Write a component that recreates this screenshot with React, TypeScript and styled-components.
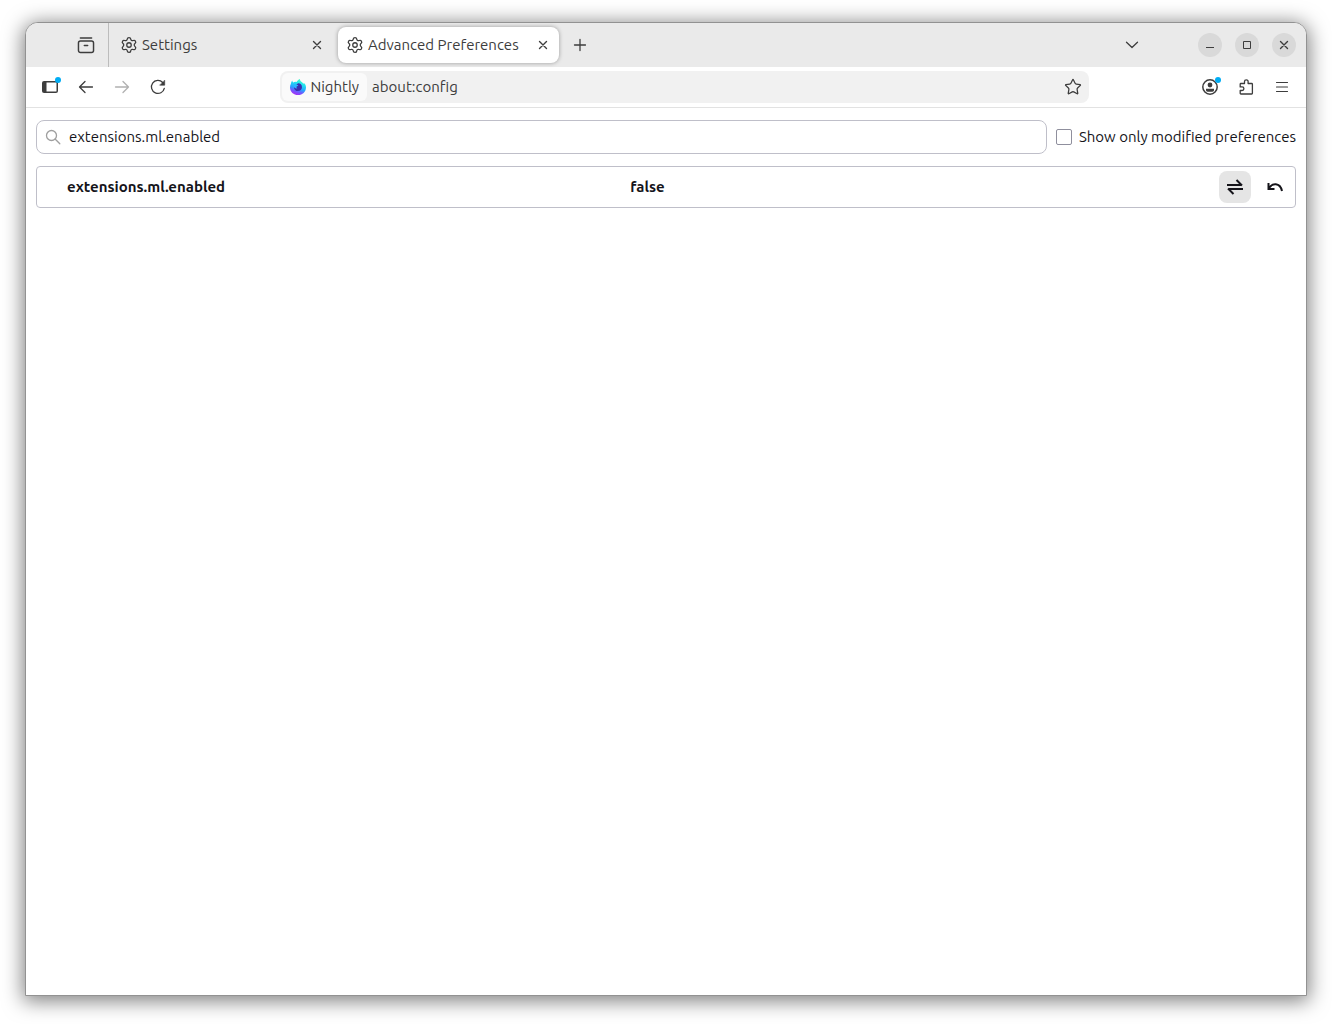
import React from "react";
import styled, { createGlobalStyle, css } from "styled-components";
import { Settings, Star } from "lucide-react";

const GlobalStyle = createGlobalStyle`
  *, *::before, *::after { box-sizing: border-box; }
  body {
    margin: 0;
    background: #fff;
    color: #15141a;
    font-family: Ubuntu, "Noto Sans", "Open Sans", sans-serif;
    font-size: 15px;
    line-height: 20px;
  }
  button, input { font: inherit; color: inherit; }
  button { margin: 0; padding: 0; border: 0; background: none; }
  svg { display: block; flex: none; }
`;

const Desktop = styled.div`
  display: flex;
  min-height: 100vh;
  padding: 22px 25px 28px;
`;

const BrowserWindow = styled.div`
  flex: 1;
  min-width: 0;
  display: flex;
  flex-direction: column;
  overflow: hidden;
  background: #fff;
  border: 1px solid #929292;
  border-radius: 13px 13px 0 0;
  box-shadow: 0 3px 20px 2px rgba(0, 0, 0, 0.5);
`;

const TabBar = styled.header`
  display: flex;
  align-items: center;
  height: 44px;
  padding: 0 10px 0 44px;
  background: #eaeaea;
  color: #3d3d3d;
`;

const iconButton = css`
  display: flex;
  align-items: center;
  justify-content: center;
  flex: none;
`;

const ToolButton = styled.button<{ $faded?: boolean }>`
  ${iconButton}
  position: relative;
  width: 32px;
  height: 32px;
  opacity: ${(p) => (p.$faded ? 0.4 : 1)};
`;

const TabStrip = styled.nav`
  display: flex;
  align-items: center;
  align-self: stretch;
  gap: 5px;
  margin-left: 6px;
  padding: 0 5px 0 3px;
  border-left: 1px solid #bcbcbc;
`;

const Tab = styled.div<{ $selected?: boolean }>`
  display: flex;
  align-items: center;
  width: 221px;
  height: 36px;
  padding: 0 4px 0 8px;
  border-radius: 8px;
  ${(p) =>
    p.$selected &&
    css`
      background: #fff;
      box-shadow: 0 0 4px rgba(0, 0, 0, 0.35);
    `}
`;

const TabTitle = styled.span`
  flex: 1;
  margin-left: 4px;
  white-space: nowrap;
`;

const TabClose = styled.button`
  ${iconButton}
  width: 24px;
  height: 24px;
`;

const WindowControls = styled.div`
  display: flex;
  gap: 13px;
  margin-left: 50px;
`;

const WindowButton = styled.button`
  ${iconButton}
  width: 24px;
  height: 24px;
  border-radius: 50%;
  background: #d9d9d9;
`;

const Spacer = styled.div`
  flex: 1;
`;

const NavBar = styled.div`
  display: flex;
  align-items: center;
  height: 41px;
  padding: 0 8px;
  border-bottom: 1px solid #e2e2e2;
  color: #3d3d3d;
`;

const ButtonGroup = styled.div`
  display: flex;
  gap: 4px;
`;

const Badge = styled.span`
  position: absolute;
  top: 6px;
  right: 5px;
  width: 6px;
  height: 6px;
  border-radius: 50%;
  background: #00adf4;
`;

const UrlBar = styled.div`
  display: flex;
  align-items: center;
  flex: 0 1 809px;
  min-width: 0;
  height: 32px;
  padding-left: 2px;
  border-radius: 8px;
  background: #f1f1f1;
`;

const Identity = styled.button`
  display: flex;
  align-items: center;
  gap: 5px;
  height: 28px;
  padding: 0 8px;
  border-radius: 6px;
  background: #fafafa;
`;

const UrlInput = styled.input`
  flex: 1;
  min-width: 0;
  padding: 0 5px;
  border: 0;
  outline: 0;
  background: none;
`;

const Content = styled.main`
  flex: 1;
  padding: 12px 10px;
`;

const SearchRow = styled.div`
  display: flex;
  align-items: center;
  gap: 9px;
`;

const SearchBox = styled.label`
  display: flex;
  align-items: center;
  flex: 1;
  min-width: 0;
  height: 34px;
  padding: 0 8px;
  gap: 8px;
  border: 1px solid #bfbfc9;
  border-radius: 8px;
  color: #9f9f9f;
`;

const SearchInput = styled.input`
  flex: 1;
  min-width: 0;
  padding: 0;
  border: 0;
  outline: 0;
  background: none;
  color: #15141a;
`;

const CheckLabel = styled.label`
  display: flex;
  align-items: center;
  gap: 7px;
  white-space: nowrap;
`;

const CheckBox = styled.input`
  appearance: none;
  width: 16px;
  height: 16px;
  margin: 0;
  border: 1px solid #8f8f9d;
  border-radius: 2px;
  background: #fff;
`;

const PrefTable = styled.table`
  width: 100%;
  margin-top: 12px;
  border: 1px solid #bfbfc9;
  border-radius: 4px;
  border-spacing: 0;
  table-layout: fixed;
  text-align: left;
  font-weight: 700;
`;

const NameCell = styled.th`
  width: 47%;
  padding: 0 0 0 30px;
`;

const ValueCell = styled.td`
  padding: 0 2px;
`;

const ActionCell = styled.td`
  width: 80px;
  padding: 4px;
`;

const Actions = styled.div`
  display: flex;
  gap: 8px;
`;

const ActionButton = styled.button<{ $filled?: boolean }>`
  ${iconButton}
  width: 32px;
  height: 32px;
  border-radius: 8px;
  background: ${(p) => (p.$filled ? "#e5e5e5" : "transparent")};
`;

type IconProps = {
  children: React.ReactNode;
  width?: number;
  size?: number;
  sharp?: boolean;
};

const Icon = ({ children, width = 1.3, size = 16, sharp }: IconProps) => (
  <svg
    width={size}
    height={size}
    viewBox="0 0 16 16"
    fill="none"
    stroke="currentColor"
    strokeWidth={width}
    strokeLinecap={sharp ? "butt" : "round"}
    strokeLinejoin={sharp ? "miter" : "round"}
    aria-hidden="true"
  >
    {children}
  </svg>
);

const CloseIcon = () => (
  <Icon width={1.4}>
    <path d="M4.5 4.5l7 7M11.5 4.5l-7 7" />
  </Icon>
);

const NightlyLogo = () => (
  <svg width="16" height="16" viewBox="0 0 16 16" aria-hidden="true">
    <defs>
      <linearGradient id="flame" x1="0.75" y1="0" x2="0.4" y2="1">
        <stop offset="0" stopColor="#54ffbd" />
        <stop offset="0.3" stopColor="#22e4ee" />
        <stop offset="0.6" stopColor="#22a8ff" />
        <stop offset="0.8" stopColor="#7058ff" />
        <stop offset="1" stopColor="#a530f5" />
      </linearGradient>
    </defs>
    <path
      fill="url(#flame)"
      d="M.9 4.800C1 3.400 1.500 2.300 2.300 1.400c.1.900.4 1.500.9 2 .9-.5 2.200-.7 3.500-.500C7.300 1.600 8.300.5 9.900 0c0 1.300.8 2.200 1.900 3.100.8.6 1.400 1.200 1.800 1.900.2-.4.2-.8.1-1.300C15.200 4.900 16 6.600 16 8.400 16 12.700 12.500 16 8.100 16 3.600 16 0 12.700 0 8.400 0 7 .3 5.800.9 4.800z"
    />
    <path
      fill="#3a2fae"
      d="M7.900 4.300c2.300-.2 4.100 1.500 4.100 3.900 0 2.300-1.800 3.900-4 3.900-2.300 0-4-1.700-4-3.700 0-.6.1-1 .3-1.500C5.500 6.700 7 6 7.900 4.300z"
    />
    <path
      fill="#2cb4ff"
      d="M3.500 5.900c1-.5 2.200-.4 3 .1.700-.1 1.300 0 1.800.3-.3.800-1 1-1.700 1.300-.4.700 0 1.500.9 1.700-1.600.5-2.900-.3-3.600-1.300z"
    />
  </svg>
);

const PrefTab = ({ title, selected }: { title: string; selected?: boolean }) => (
  <Tab $selected={selected}>
    <Settings size={18} strokeWidth={1.7} aria-hidden="true" />
    <TabTitle>{title}</TabTitle>
    <TabClose aria-label={`Close ${title}`}>
      <CloseIcon />
    </TabClose>
  </Tab>
);

export default function App() {
  return (
    <>
      <GlobalStyle />
      <Desktop>
        <BrowserWindow>
          <TabBar>
            <ToolButton aria-label="Recent browsing">
              <Icon size={18}>
                <rect x="1.3" y="4.500" width="13.4" height="10.2" rx="1.8" />
                <path d="M3 1.7h10M6.5 8.5h3" />
              </Icon>
            </ToolButton>
            <TabStrip aria-label="Tabs">
              <PrefTab title="Settings" />
              <PrefTab title="Advanced Preferences" selected />
            </TabStrip>
            <ToolButton aria-label="New tab">
              <Icon>
                <path d="M8 2.5v11M2.5 8h11" />
              </Icon>
            </ToolButton>
            <Spacer />
            <ToolButton aria-label="List all tabs">
              <Icon>
                <path d="M2.5 5.2L8 10.5l5.5-5.3" />
              </Icon>
            </ToolButton>
            <WindowControls>
              <WindowButton aria-label="Minimize">
                <Icon width={1} sharp>
                  <path d="M4 10.5h8" />
                </Icon>
              </WindowButton>
              <WindowButton aria-label="Maximize">
                <Icon width={1} sharp>
                  <path d="M4.5 4.5h7v7h-7z" />
                </Icon>
              </WindowButton>
              <WindowButton aria-label="Close window">
                <CloseIcon />
              </WindowButton>
            </WindowControls>
          </TabBar>

          <NavBar>
            <ButtonGroup>
              <ToolButton aria-label="Sidebar">
                <Icon width={1.5}>
                  <rect x="0.75" y="2.75" width="14.5" height="10.5" rx="1.3" />
                  <path fill="currentColor" stroke="none" d="M1 3h3.500v10H1z" />
                </Icon>
                <Badge />
              </ToolButton>
              <ToolButton aria-label="Back">
                <Icon>
                  <path d="M14.500 8h-13M7 2.500L1.500 8 7 13.500" />
                </Icon>
              </ToolButton>
              <ToolButton aria-label="Forward" $faded>
                <Icon>
                  <path d="M1.500 8h13M9 2.500L14.500 8 9 13.500" />
                </Icon>
              </ToolButton>
              <ToolButton aria-label="Reload">
                <Icon>
                  <path d="M14.300 9.300A6.500 6.500 0 1 1 12.700 3.500" />
                  <path fill="currentColor" strokeWidth="0.6" d="M14.700 1.500v4.700H10z" />
                </Icon>
              </ToolButton>
            </ButtonGroup>
            <Spacer />
            <UrlBar>
              <Identity>
                <NightlyLogo />
                Nightly
              </Identity>
              <UrlInput aria-label="Address" defaultValue="about:config" />
              <ToolButton aria-label="Bookmark this page">
                <Star size={18} strokeWidth={1.7} />
              </ToolButton>
            </UrlBar>
            <Spacer />
            <ButtonGroup>
              <ToolButton aria-label="Account">
                <Icon width={1.5}>
                  <circle cx="8" cy="8" r="7.2" />
                  <g fill="currentColor" stroke="none">
                    <circle cx="8" cy="6" r="2.4" />
                    <path d="M4 9.800h8v1.200c0 1-.6 1.700-1.600 1.700H5.600C4.600 12.700 4 12 4 11z" />
                  </g>
                </Icon>
                <Badge />
              </ToolButton>
              <ToolButton aria-label="Extensions">
                <Icon>
                  <path d="M2.200 7.500V5.200c0-.4.300-.7.700-.7h3.600V2.600a1.800 1.800 0 0 1 3.600 0v1.900h3.600c.4 0 .7.3.7.7v9.100c0 .4-.3.7-.7.7H2.900c-.4 0-.7-.3-.7-.7v-2.800h1.900a1.800 1.800 0 0 0 0-3.600H2.200z" />
                </Icon>
              </ToolButton>
              <ToolButton aria-label="Application menu">
                <Icon width={1.2}>
                  <path d="M2.500 3.500h11M2.500 8h11M2.500 12.500h11" />
                </Icon>
              </ToolButton>
            </ButtonGroup>
          </NavBar>

          <Content>
            <SearchRow>
              <SearchBox>
                <Icon>
                  <circle cx="6.500" cy="6.500" r="5" />
                  <path d="M10.300 10.300l4.500 4.500" />
                </Icon>
                <SearchInput aria-label="Search preference name" defaultValue="extensions.ml.enabled" />
              </SearchBox>
              <CheckLabel>
                <CheckBox type="checkbox" />
                Show only modified preferences
              </CheckLabel>
            </SearchRow>
            <PrefTable>
              <tbody>
                <tr>
                  <NameCell scope="row">extensions.ml.enabled</NameCell>
                  <ValueCell>false</ValueCell>
                  <ActionCell>
                    <Actions>
                      <ActionButton $filled aria-label="Toggle">
                        <Icon width={2} sharp>
                          <path d="M0 6h14.500M9.500 1l5.500 5.500M16 10H1.500M6.500 15L1 9.500" />
                        </Icon>
                      </ActionButton>
                      <ActionButton aria-label="Reset">
                        <Icon width={2} sharp>
                          <path d="M1.500 4v6h6M2 9.500C5 3.800 13 3.300 15 12" />
                        </Icon>
                      </ActionButton>
                    </Actions>
                  </ActionCell>
                </tr>
              </tbody>
            </PrefTable>
          </Content>
        </BrowserWindow>
      </Desktop>
    </>
  );
}
